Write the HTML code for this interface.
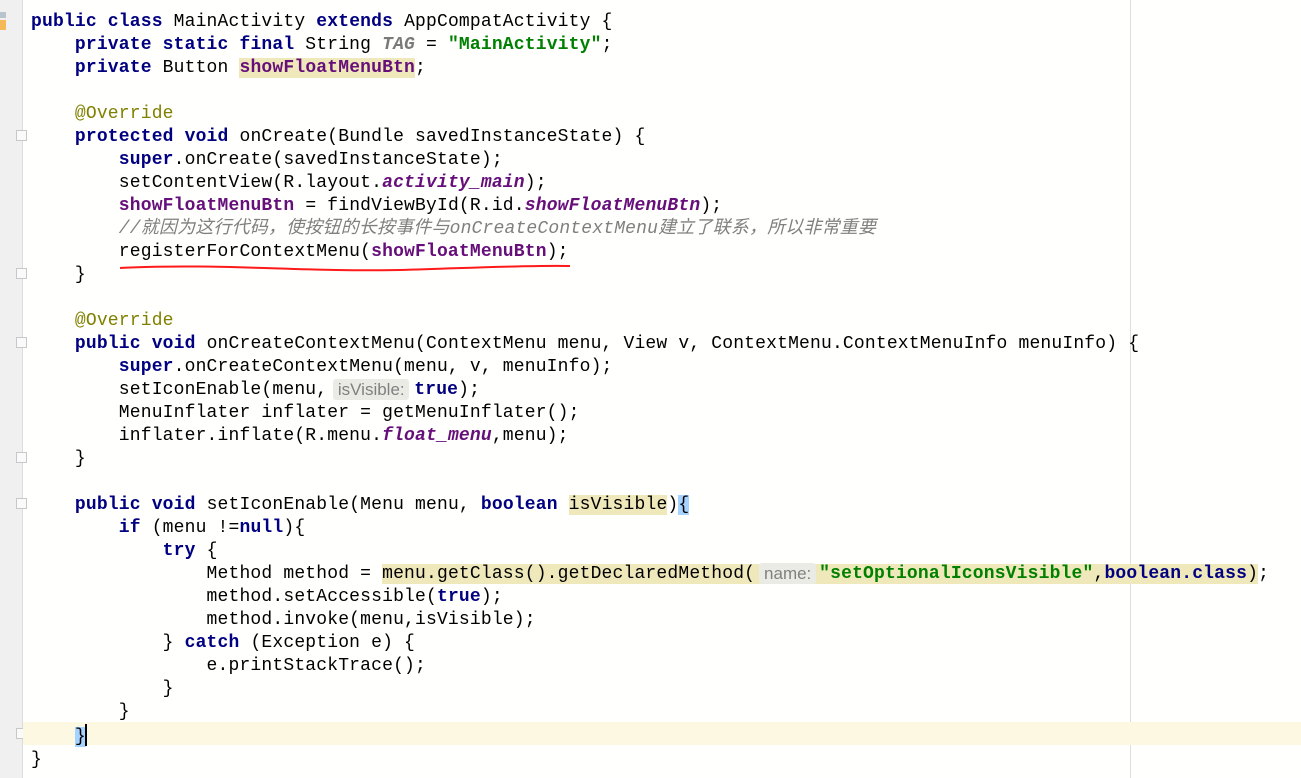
<!DOCTYPE html>
<html><head><meta charset="utf-8"><style>
html,body{margin:0;padding:0;}
body{width:1301px;height:778px;background:#fffffd;position:relative;overflow:hidden;}
.gut{position:absolute;left:0;top:0;width:22px;height:778px;background:#f0f0f0;border-right:1px solid #dcdcdc;}
.margin{position:absolute;left:1130px;top:0;width:1px;height:778px;background:#dedede;}
.cur{position:absolute;left:23px;top:722px;width:1278px;height:23px;background:#fdf8e2;}
pre{position:absolute;left:31px;top:11px;margin:0;font-family:"Liberation Mono","Noto Sans CJK SC",monospace;font-size:18px;letter-spacing:0.17px;line-height:23px;color:#000;}
.k{color:#000080;font-weight:bold;}
.f{color:#660e7a;font-weight:bold;}
.fi{color:#660e7a;font-weight:bold;font-style:italic;}
.s{color:#008000;font-weight:bold;}
.a{color:#808000;}
.c{color:#808080;font-style:italic;}
.t{color:#7a7a7a;font-style:italic;font-weight:bold;}
.hl{background:#efe8bb;}
.bl{background:#a6d2ff;}
.h{display:inline-block;position:relative;height:18px;vertical-align:-3px;}
.h span{position:absolute;top:0;height:21px;line-height:21px;background:#ebebe6;border-radius:3px;color:#808080;font-family:"Liberation Sans",sans-serif;font-size:17px;letter-spacing:0;text-align:center;}
.fold{position:absolute;left:16px;width:11px;height:11px;border:1px solid #c8c8c8;background:#fafafa;box-sizing:border-box;}
</style></head><body>
<div class="gut"></div>
<div style="position:absolute;left:0;top:12px;width:6px;height:6px;background:#b8c3cc"></div>
<div style="position:absolute;left:0;top:20px;width:6px;height:10px;background:#f5b955"></div>
<div class="fold" style="top:130px"></div>
<div class="fold" style="top:268px"></div>
<div class="fold" style="top:337px"></div>
<div class="fold" style="top:452px"></div>
<div class="fold" style="top:498px"></div>
<div class="fold" style="top:728px"></div>
<div class="margin"></div>
<div class="cur"></div>
<pre><span class="k">public class</span> MainActivity <span class="k">extends</span> AppCompatActivity {
    <span class="k">private static final</span> String <span class="t">TAG</span> = <span class="s">"MainActivity"</span>;
    <span class="k">private</span> Button <span class="f hl">showFloatMenuBtn</span>;

    <span class="a">@Override</span>
    <span class="k">protected void</span> onCreate(Bundle savedInstanceState) {
        <span class="k">super</span>.onCreate(savedInstanceState);
        setContentView(R.layout.<span class="fi">activity_main</span>);
        <span class="f">showFloatMenuBtn</span> = findViewById(R.id.<span class="fi">showFloatMenuBtn</span>);
        <span class="c">//就因为这行代码，使按钮的长按事件与onCreateContextMenu建立了联系，所以非常重要</span>
        registerForContextMenu(<span class="f">showFloatMenuBtn</span>);
    }

    <span class="a">@Override</span>
    <span class="k">public void</span> onCreateContextMenu(ContextMenu menu, View v, ContextMenu.ContextMenuInfo menuInfo) {
        <span class="k">super</span>.onCreateContextMenu(menu, v, menuInfo);
        setIconEnable(menu,<span class="h" style="width:87px"><span style="left:6px;width:76px">isVisible:</span></span><span class="k">true</span>);
        MenuInflater inflater = getMenuInflater();
        inflater.inflate(R.menu.<span class="fi">float_menu</span>,menu);
    }

    <span class="k">public void</span> setIconEnable(Menu menu, <span class="k">boolean</span> <span class="hl">isVisible</span>)<span class="bl">{</span>
        <span class="k">if</span> (menu !=<span class="k">null</span>){
            <span class="k">try</span> {
                Method method = <span class="hl">menu.getClass().getDeclaredMethod(<span class="h" style="width:64px"><span style="left:4px;width:57px">name:</span></span><span class="s">"setOptionalIconsVisible"</span>,<span class="k">boolean.class</span>)</span>;
                method.setAccessible(<span class="k">true</span>);
                method.invoke(menu,isVisible);
            } <span class="k">catch</span> (Exception e) {
                e.printStackTrace();
            }
        }
    <span class="bl">}</span><span style="display:inline-block;width:2px;height:22px;background:#000;vertical-align:-5px;margin-left:-1px"></span>
}</pre>
<svg style="position:absolute;left:0;top:0" width="1301" height="778"><path d="M120 268 C 220 263, 300 272, 400 270 C 470 268, 530 265, 570 266" stroke="#ff1a1a" stroke-width="2" fill="none"/></svg>
</body></html>
